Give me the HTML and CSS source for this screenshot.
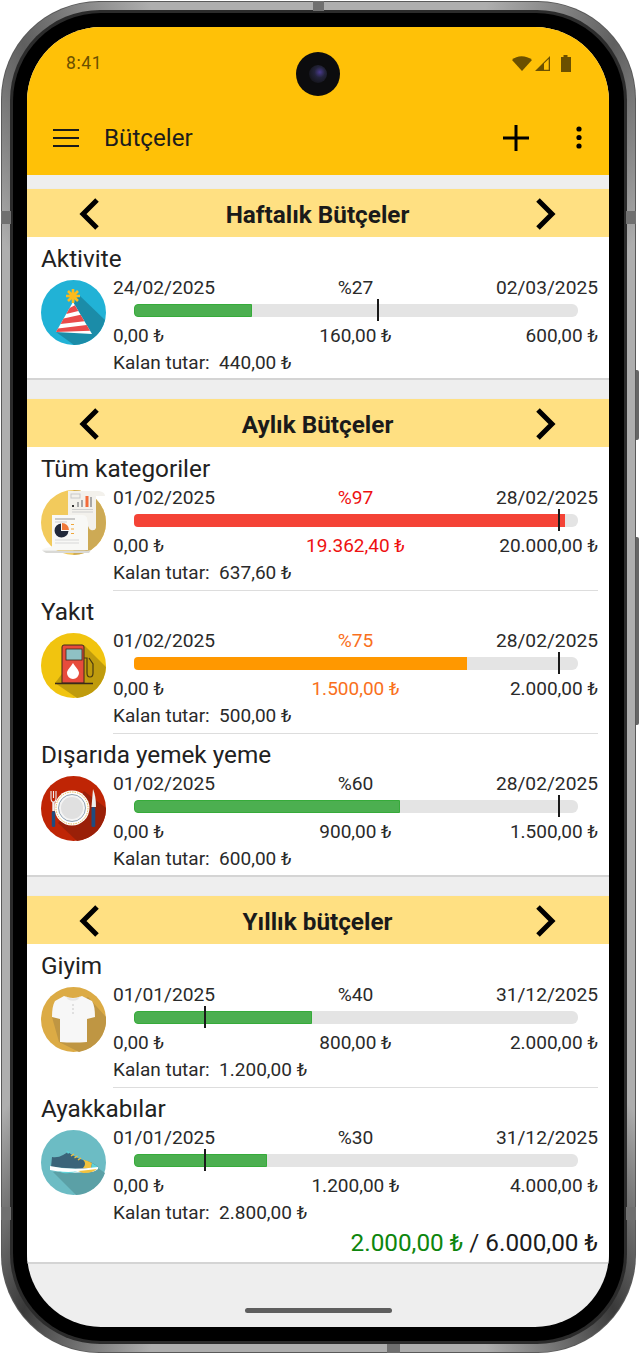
FILE: index.html
```html
<!DOCTYPE html>
<html lang="tr">
<head>
    <meta charset="UTF-8">
    <meta name="viewport" content="width=device-width, initial-scale=1.0">
    <title>Bütçeler</title>
    <link rel="stylesheet" href="styles.css">
</head>
<body>
<div class="phone">
    <div class="phone-band">
        <div class="phone-edge">
            <div class="phone-rim">
                <div class="bezel">
                    <div class="screen">
                        <header class="appbar">
                            <div class="status">
                                <span class="status-time">8:41</span>
                                <svg class="status-icons" width="60" height="18" viewBox="0 0 60 18">
                                    <path d="M0 6 C5 1 14 1 20 6 L10 17 Z" fill="#6b5000"/>
                                    <path d="M23 17 L38 2 V17 Z M32 9.500 L36.700 5 V15.700 H32 Z" fill="#6b5000" fill-rule="evenodd"/>
                                    <path d="M49 3 H51.500 V1 H55.500 V3 H59 V18 H49 Z" fill="#6b5000"/>
                                </svg>
                            </div>
                            <div class="toolbar">
                                <svg class="toolbar-menu" width="26" height="20" viewBox="0 0 26 20">
                                    <path d="M0 2 H26 M0 10 H26 M0 18 H26" stroke="#1a1a1a" stroke-width="2"/>
                                </svg>
                                <span class="toolbar-title">Bütçeler</span>
                                <svg class="toolbar-add" width="26" height="26" viewBox="0 0 26 26">
                                    <path d="M13 0 V26 M0 13 H26" stroke="#000" stroke-width="3"/>
                                </svg>
                                <svg class="toolbar-more" width="6" height="24" viewBox="0 0 6 24">
                                    <circle cx="3" cy="3" r="2.600"/>
                                    <circle cx="3" cy="11.500" r="2.600"/>
                                    <circle cx="3" cy="20" r="2.600"/>
                                </svg>
                            </div>
                        </header>

                        <section class="period period-first">
                            <div class="period-head">
                                <svg width="22" height="34" viewBox="0 0 22 34"><path d="M19 3 L5 17 L19 31" class="chevron"/></svg>
                                <h2>Haftalık Bütçeler</h2>
                                <svg width="22" height="34" viewBox="0 0 22 34"><path d="M3 3 L17 17 L3 31" class="chevron"/></svg>
                            </div>
                            <div class="period-card">
                                <div class="budget budget-short">
                                    <div class="budget-name">Aktivite</div>
                                    <div class="budget-body">
                                        <svg class="budget-icon" viewBox="0 0 65 65">
                                            <circle cx="32.500" cy="32.500" r="32.500" fill="#21b2d6"/>
                                            <path d="M38 15 L64 40 A32.500 32.500 0 0 1 33 65 L15 52 Z" fill="#1b8ca8"/>
                                            <path d="M32 22 L51 54 L15 52 Z" fill="#fff"/>
                                            <path d="M28.600 28 L33.900 25.200 L37.300 31 L25.200 34 Z M22.600 38.500 L39.600 34.800 L43.400 41.200 L19.600 43.900 Z M17 48.400 L45.700 45 L49.100 50.800 L15 52 Z" fill="#e94b4b"/>
                                            <path d="M32 9 V23 M25 16 H39 M27 11 L37 21 M37 11 L27 21" stroke="#fdbb1c" stroke-width="2.600"/>
                                        </svg>
                                        <div class="budget-detail">
                                            <div class="budget-line"><span>24/02/2025</span><span>%27</span><span>02/03/2025</span></div>
                                            <div class="bar">
                                                <div class="bar-fill bar-green" style="width: 26.6%"></div>
                                                <i class="bar-mark" style="left: 54.8%"></i>
                                            </div>
                                            <div class="budget-line budget-amounts"><span>0,00 ₺</span><span>160,00 ₺</span><span>600,00 ₺</span></div>
                                            <div class="budget-left">Kalan tutar:&nbsp; 440,00 ₺</div>
                                        </div>
                                    </div>
                                </div>
                            </div>
                        </section>

                        <section class="period">
                            <div class="period-head">
                                <svg width="22" height="34" viewBox="0 0 22 34"><path d="M19 3 L5 17 L19 31" class="chevron"/></svg>
                                <h2>Aylık Bütçeler</h2>
                                <svg width="22" height="34" viewBox="0 0 22 34"><path d="M3 3 L17 17 L3 31" class="chevron"/></svg>
                            </div>
                            <div class="period-card">
                                <div class="budget">
                                    <div class="budget-name">Tüm kategoriler</div>
                                    <div class="budget-body">
                                        <svg class="budget-icon" viewBox="0 0 65 65">
                                            <defs><clipPath id="all-half"><rect x="32.500" width="33" height="65"/></clipPath></defs>
                                            <circle cx="32.500" cy="32.500" r="32.500" fill="#f2ca5c"/>
                                            <circle cx="32.500" cy="32.500" r="32.500" fill="#cdaa55" clip-path="url(#all-half)"/>
                                            <path d="M27 1 H58 Q64 2 64 6 H55 V38 Q54 41 50 40 Q46 38 46 28 H27 Z" fill="#f3f1ec"/>
                                            <rect x="30" y="4" width="9" height="4" fill="none" stroke="#c9c9c9"/>
                                            <path d="M31 15 H33 V17 H31 Z" fill="#333"/>
                                            <path d="M36 12 H38 V17 H36 Z M40 10 H42 V17 H40 Z M49 7 H51 V17 H49 Z" fill="#a8a8a8"/>
                                            <rect x="44.500" y="6" width="3" height="11" fill="#f26b3a"/>
                                            <path d="M31 19.500 H52 M31 22 H52" stroke="#cfcfcf"/>
                                            <path d="M11 25 H42 Q47 26 47 32 V60 H1 Q2 58 11 57 Z" fill="#f8f8f6"/>
                                            <path d="M14 29 H34" stroke="#9a9a9a"/>
                                            <path d="M14 32 H26" stroke="#cfcfcf"/>
                                            <path d="M20 33.500 A7 7 0 1 0 27.500 41 H20 Z" fill="#22293a"/>
                                            <path d="M21 33 A7 7 0 0 1 28 40 H21 Z" fill="#f0793a"/>
                                            <path d="M30 34.500 H33 M30 39 H33 M30 43.500 H33" stroke="#f0a63a"/>
                                            <path d="M14 50 H38 M14 53 H38" stroke="#d8d8d8"/>
                                            <path d="M1 60.500 H43 Q47 61 50 60 L48 63 H5 Z" fill="#d9d9d6"/>
                                        </svg>
                                        <div class="budget-detail">
                                            <div class="budget-line"><span>01/02/2025</span><span class="text-red">%97</span><span>28/02/2025</span></div>
                                            <div class="bar">
                                                <div class="bar-fill bar-red" style="width: 97%"></div>
                                                <i class="bar-mark" style="left: 95.5%"></i>
                                            </div>
                                            <div class="budget-line budget-amounts"><span>0,00 ₺</span><span class="text-red">19.362,40 ₺</span><span>20.000,00 ₺</span></div>
                                            <div class="budget-left">Kalan tutar:&nbsp; 637,60 ₺</div>
                                        </div>
                                    </div>
                                    <div class="budget-rule"></div>
                                </div>
                                <div class="budget">
                                    <div class="budget-name">Yakıt</div>
                                    <div class="budget-body">
                                        <svg class="budget-icon" viewBox="0 0 65 65">
                                            <circle cx="32.500" cy="32.500" r="32.500" fill="#f1c40f"/>
                                            <path d="M43 12 L65 34 A32.500 32.500 0 0 1 36 65 L14 50 Z" fill="#bf9b0d"/>
                                            <path d="M21 14 Q21 12 23 12 H41 Q43 12 43 14 V50 H21 Z" fill="#e74c3c" stroke="#3a2a1a"/>
                                            <rect x="25" y="16" width="16" height="11" fill="#8fc1c4" stroke="#3a2a1a" stroke-width=".8"/>
                                            <path d="M32 30 C35 35 38 37 38 40 A6 6 0 0 1 26 40 C26 37 29 35 32 30 Z" fill="#fff"/>
                                            <path d="M43 25 H46 V40 Q46 44 49 44 Q52 44 52 40 V31 L48 25" fill="none" stroke="#4a3a10" stroke-width="1.200"/>
                                            <path d="M14 50.500 H52" stroke="#3a2a1a" stroke-width="1.400"/>
                                        </svg>
                                        <div class="budget-detail">
                                            <div class="budget-line"><span>01/02/2025</span><span class="text-orange">%75</span><span>28/02/2025</span></div>
                                            <div class="bar">
                                                <div class="bar-fill bar-orange" style="width: 75%"></div>
                                                <i class="bar-mark" style="left: 95.5%"></i>
                                            </div>
                                            <div class="budget-line budget-amounts"><span>0,00 ₺</span><span class="text-orange">1.500,00 ₺</span><span>2.000,00 ₺</span></div>
                                            <div class="budget-left">Kalan tutar:&nbsp; 500,00 ₺</div>
                                        </div>
                                    </div>
                                    <div class="budget-rule"></div>
                                </div>
                                <div class="budget budget-end">
                                    <div class="budget-name">Dışarıda yemek yeme</div>
                                    <div class="budget-body">
                                        <svg class="budget-icon" viewBox="0 0 65 65">
                                            <circle cx="32.500" cy="32.500" r="32.500" fill="#bf2505"/>
                                            <path d="M43 15 L65 32 A32.500 32.500 0 0 1 36 65 L17 47 Z" fill="#9a2008"/>
                                            <circle cx="31" cy="32" r="17.500" fill="#fff"/>
                                            <circle cx="31" cy="32" r="16" fill="none" stroke="#e3b74e" stroke-dasharray="1.500 1"/>
                                            <circle cx="31" cy="32" r="13.500" fill="#f4f4f4" stroke="#8fa2b3"/>
                                            <circle cx="31" cy="32" r="11" fill="#e0e0e0"/>
                                            <path d="M10 15 V22 Q10 26 12.500 26 Q15 26 15 22 V15 M12.500 15 V22" fill="none" stroke="#eee" stroke-width="1.100"/>
                                            <rect x="11.300" y="26" width="2.400" height="9" fill="#eee"/>
                                            <rect x="10.800" y="35" width="3.400" height="16" rx="1.500" fill="#1f4c80"/>
                                            <path d="M52 13 Q55 20 55 31 H50.500 Z" fill="#eee"/>
                                            <rect x="50.500" y="31" width="3.800" height="20" rx="1.500" fill="#1f4c80"/>
                                        </svg>
                                        <div class="budget-detail">
                                            <div class="budget-line"><span>01/02/2025</span><span>%60</span><span>28/02/2025</span></div>
                                            <div class="bar">
                                                <div class="bar-fill bar-green" style="width: 60%"></div>
                                                <i class="bar-mark" style="left: 95.5%"></i>
                                            </div>
                                            <div class="budget-line budget-amounts"><span>0,00 ₺</span><span>900,00 ₺</span><span>1.500,00 ₺</span></div>
                                            <div class="budget-left">Kalan tutar:&nbsp; 600,00 ₺</div>
                                        </div>
                                    </div>
                                </div>
                            </div>
                        </section>

                        <section class="period">
                            <div class="period-head">
                                <svg width="22" height="34" viewBox="0 0 22 34"><path d="M19 3 L5 17 L19 31" class="chevron"/></svg>
                                <h2>Yıllık bütçeler</h2>
                                <svg width="22" height="34" viewBox="0 0 22 34"><path d="M3 3 L17 17 L3 31" class="chevron"/></svg>
                            </div>
                            <div class="period-card">
                                <div class="budget">
                                    <div class="budget-name">Giyim</div>
                                    <div class="budget-body">
                                        <svg class="budget-icon" viewBox="0 0 65 65">
                                            <circle cx="32.500" cy="32.500" r="32.500" fill="#dcab45"/>
                                            <path d="M47 10 L65 30 A32.500 32.500 0 0 1 38 65 L18 55 L11 30 Z" fill="#bf9643"/>
                                            <path d="M23 9 Q32 13 41 9 L51 14 Q54 19 54 30 L46 32 V55 Q32 56 19 55 V32 L11 30 Q11 19 14 14 Z" fill="#f7f7f7"/>
                                            <path d="M25 9.500 Q32 13.500 39 9.500 L37 12.500 Q32 15 27 12.500 Z" fill="#e6e6e6"/>
                                            <circle cx="32" cy="18" r=".8" fill="#c4c4c4"/><circle cx="32" cy="22" r=".8" fill="#c4c4c4"/><circle cx="32" cy="26" r=".8" fill="#c4c4c4"/>
                                        </svg>
                                        <div class="budget-detail">
                                            <div class="budget-line"><span>01/01/2025</span><span>%40</span><span>31/12/2025</span></div>
                                            <div class="bar">
                                                <div class="bar-fill bar-green" style="width: 40%"></div>
                                                <i class="bar-mark" style="left: 15.8%"></i>
                                            </div>
                                            <div class="budget-line budget-amounts"><span>0,00 ₺</span><span>800,00 ₺</span><span>2.000,00 ₺</span></div>
                                            <div class="budget-left">Kalan tutar:&nbsp; 1.200,00 ₺</div>
                                        </div>
                                    </div>
                                    <div class="budget-rule"></div>
                                </div>
                                <div class="budget budget-last">
                                    <div class="budget-name">Ayakkabılar</div>
                                    <div class="budget-body">
                                        <svg class="budget-icon" viewBox="0 0 65 65">
                                            <circle cx="32.500" cy="32.500" r="32.500" fill="#6cbcc4"/>
                                            <path d="M12 42 L57 38 L64 43 A32.500 32.500 0 0 1 35 65 Z" fill="#5ba0a6"/>
                                            <path d="M11 27 Q17 28 22 25 L27 22 Q33 27 42 30 Q52 32 57 37 L55 40 L10 37 Z" fill="#3b6479"/>
                                            <path d="M42 29.500 Q48 31 51 33 L50 39 L42 38 Q46 34 42 29.500 Z" fill="#f2c23e"/>
                                            <path d="M51 33 Q55 35 57 37 L55 40 L50 39 Z" fill="#5fd2d8"/>
                                            <path d="M30 26 L33 24 M33.500 28 L36.500 26 M37 30 L40 28" stroke="#f2c23e" stroke-width="1.300"/>
                                            <path d="M25 20.500 L29 22 L27 24 Z" fill="#5fd2d8"/>
                                            <path d="M9 36 Q30 41 57 37 L57 39 Q52 43 44 42 Q25 44 9 40 Z" fill="#fff"/>
                                            <path d="M16 41 Q28 43 37 41 Q30 44 22 43 Z" fill="#5fd2d8"/>
                                            <path d="M37 41 Q48 40 56 39 Q51 43.500 42 43 Z" fill="#f2c23e"/>
                                        </svg>
                                        <div class="budget-detail">
                                            <div class="budget-line"><span>01/01/2025</span><span>%30</span><span>31/12/2025</span></div>
                                            <div class="bar">
                                                <div class="bar-fill bar-green" style="width: 30%"></div>
                                                <i class="bar-mark" style="left: 15.8%"></i>
                                            </div>
                                            <div class="budget-line budget-amounts"><span>0,00 ₺</span><span>1.200,00 ₺</span><span>4.000,00 ₺</span></div>
                                            <div class="budget-left">Kalan tutar:&nbsp; 2.800,00 ₺</div>
                                        </div>
                                    </div>
                                </div>
                                <div class="period-total"><span class="text-green">2.000,00 ₺</span> / 6.000,00 ₺</div>
                            </div>
                        </section>

                        <div class="navbar"><div class="navbar-handle"></div></div>
                    </div>
                </div>
            </div>
        </div>
    </div>

    <div class="camera"><div class="camera-lens"></div></div>

    <i class="metal metal-top"></i>
    <i class="metal metal-bottom"></i>
    <i class="metal metal-left1"></i>
    <i class="metal metal-left2"></i>
    <i class="metal metal-right1"></i>
    <i class="metal metal-right2"></i>
    <i class="side-key side-key1"></i>
    <i class="side-key side-key2"></i>
</div>
</body>
</html>
```

FILE: styles.css
```css
* {
    box-sizing: border-box;
}

body {
    margin: 0;
    background-color: #fff;
    font-family: Roboto, "Liberation Sans", sans-serif;
    color: #212121;
}

/* phone frame */
.phone {
    position: relative;
    width: 640px;
    height: 1353px;
    padding: 1px 4px 0 1px;
}

.phone-band {
    height: 100%;
    padding: 1px;
    border-radius: 98px;
    background-color: #5a5a5a;
}

.phone-edge {
    height: 100%;
    padding: 8px;
    border-radius: 97px;
    background: conic-gradient(#aeaeae 0deg 14deg, #5f5f5f 25deg, #aeaeae 36deg 144deg, #3a3a3a 155deg, #aeaeae 166deg 194deg, #3a3a3a 205deg, #aeaeae 216deg 324deg, #5f5f5f 335deg, #aeaeae 346deg);
}

.phone-rim {
    height: 100%;
    padding: 3px;
    border-radius: 90px;
    background-color: #2b2b2b;
}

.bezel {
    height: 100%;
    padding: 14px 15px 14px 14px;
    border-radius: 88px;
    background-color: #000;
}

.screen {
    display: flex;
    flex-direction: column;
    height: 100%;
    border-radius: 74px;
    overflow: hidden;
    background-color: #eee;
}

.camera {
    position: absolute;
    left: 296px;
    top: 52px;
    width: 44px;
    height: 44px;
    padding: 13px;
    border-radius: 50%;
    background-color: #0c0c0e;
}

.camera-lens {
    width: 18px;
    height: 18px;
    border-radius: 50%;
    background: radial-gradient(circle at 60% 40%, #4a3a8e 0, #23233a 35%, #15151c 75%);
}

.metal {
    position: absolute;
    background-color: #707070;
}

.metal-top { left: 313px; top: 1px; width: 11px; height: 10px; }
.metal-bottom { left: 387px; top: 1344px; width: 13px; height: 9px; }
.metal-left1 { left: 1px; top: 211px; width: 10px; height: 13px; }
.metal-left2 { left: 1px; top: 1207px; width: 10px; height: 13px; }
.metal-right1 { left: 626px; top: 211px; width: 10px; height: 13px; }
.metal-right2 { left: 626px; top: 1207px; width: 10px; height: 13px; }

.side-key {
    position: absolute;
    left: 636px;
    width: 3px;
    border-radius: 0 2px 2px 0;
    background-color: #666;
}

.side-key1 { top: 370px; height: 70px; }
.side-key2 { top: 537px; height: 188px; }

/* app bar */
.appbar {
    flex: none;
    height: 148px;
    background-color: #ffc107;
}

.status {
    display: flex;
    justify-content: space-between;
    align-items: center;
    height: 24px;
    padding: 24px 37px 0 39px;
    box-sizing: content-box;
}

.status-time {
    font-size: 17.500px;
    letter-spacing: 0.6px;
    color: #6b5000;
}

.toolbar {
    display: flex;
    align-items: center;
    height: 40px;
    margin-top: 43px;
    padding: 0 27px 0 26px;
}

.toolbar-title {
    flex: 1;
    margin-left: 25px;
    font-size: 24.200px;
    color: #1c1c1c;
}

.toolbar-add {
    margin-right: 47px;
}

/* periods */
.period {
    flex: none;
    margin-top: 19px;
}

.period-first {
    margin-top: 14px;
}

.period-head {
    display: flex;
    align-items: center;
    justify-content: space-between;
    height: 48px;
    padding: 2px 52px 0 51px;
    background-color: #ffe082;
    box-shadow: 0 1px 2px rgba(0, 0, 0, 0.15);
}

.period-head h2 {
    margin: 0;
    font-size: 24.300px;
    font-weight: 700;
    color: #1a1a1a;
}

.chevron {
    fill: none;
    stroke: #000;
    stroke-width: 5;
}

.period-card {
    background-color: #fff;
    border-bottom: 2px solid #d4d4d4;
}

/* budget rows */
.budget {
    display: flex;
    flex-direction: column;
    height: 143px;
    padding: 8px 11px 0 14px;
}

.budget-short {
    height: 141px;
}

.budget-end {
    height: 142px;
}

.budget-last {
    height: 139px;
}

.budget-name {
    height: 27px;
    font-size: 24.300px;
    line-height: 27px;
    color: #212121;
}

.budget-body {
    display: flex;
    align-items: flex-start;
    margin-top: 5px;
}

.budget-icon {
    flex: none;
    width: 65px;
    height: 65px;
    margin-top: 3px;
    margin-right: 7px;
}

.budget-detail {
    flex: 1;
}

.budget-line {
    display: grid;
    grid-template-columns: 1fr auto 1fr;
    height: 22px;
    font-size: 19.200px;
    line-height: 22px;
    color: #2a2a2a;
}

.budget-line span:last-child {
    text-align: right;
}

.budget-amounts {
    margin-top: 8px;
    font-size: 19px;
}

.budget-left {
    height: 22px;
    margin-top: 5px;
    font-size: 19px;
    line-height: 22px;
    color: #2a2a2a;
}

.budget-rule {
    height: 1px;
    margin-top: auto;
    margin-bottom: -1px;
    margin-left: 72px;
    background-color: #ddd;
}

.bar {
    position: relative;
    height: 13px;
    margin: 5px 20px 0 21px;
    border-radius: 6px;
    background-color: #e4e4e4;
}

.bar-fill {
    height: 100%;
    border-radius: 4px 0 0 4px;
}

.bar-green {
    background-color: #4caf50;
    border: 1px solid #36ab3a;
}

.bar-red {
    background-color: #f44336;
}

.bar-orange {
    background-color: #ff9800;
}

.bar-mark {
    position: absolute;
    top: -5px;
    width: 2px;
    height: 22px;
    background-color: #1a1a1a;
}

.text-red {
    color: #ee1111;
}

.text-orange {
    color: #f9701c;
}

.text-green {
    color: #0d860d;
}

.period-total {
    height: 36px;
    padding: 1px 11px 3px 0;
    text-align: right;
    font-size: 24.300px;
    line-height: 32px;
    color: #1c1c1c;
}

.navbar {
    flex: 1;
    display: flex;
    justify-content: center;
    padding-top: 44px;
}

.navbar-handle {
    width: 147px;
    height: 5px;
    border-radius: 3px;
    background-color: #5e5e5e;
}
```
